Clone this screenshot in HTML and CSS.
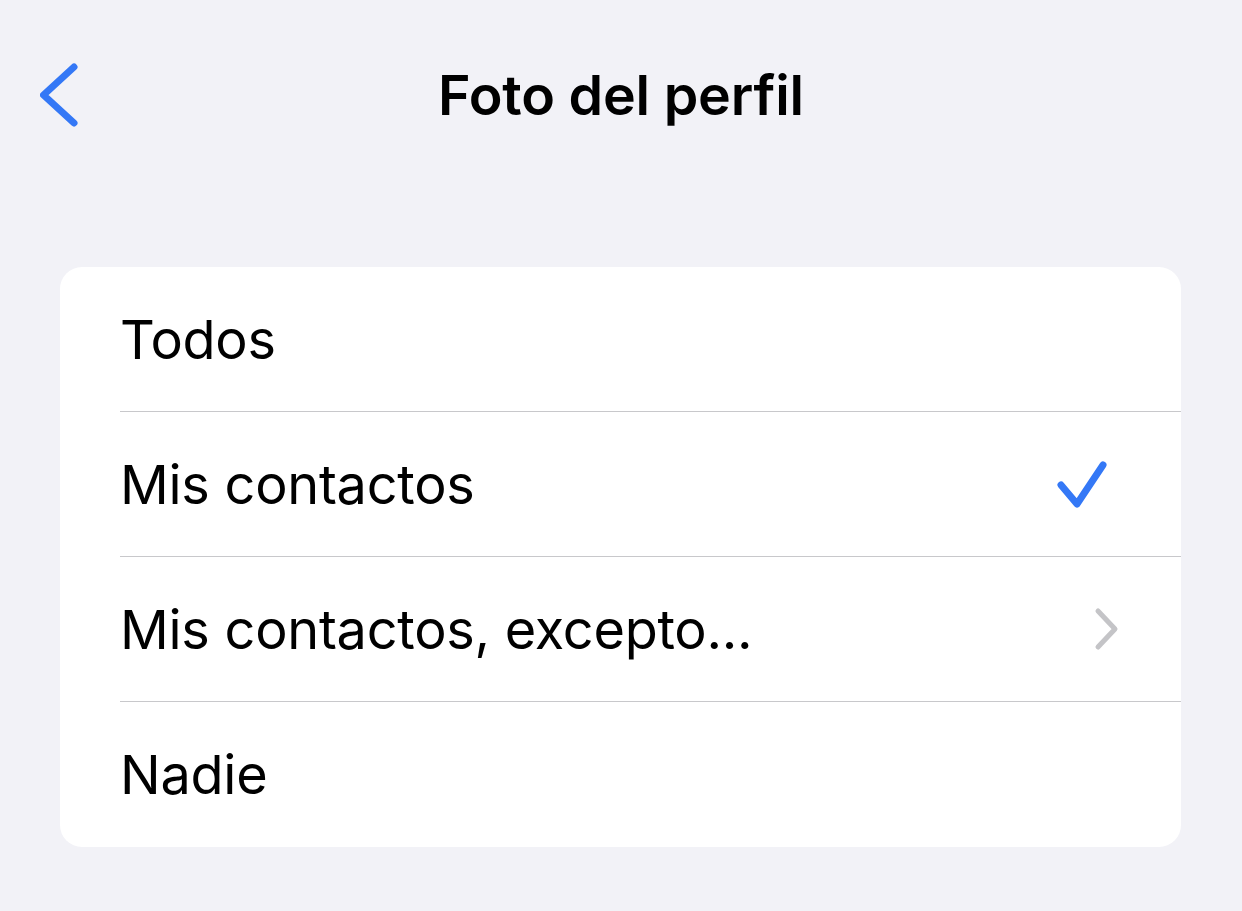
FILE: index.html
```html
<!DOCTYPE html>
<html lang="es">
<head>
  <meta charset="UTF-8">
  <meta name="viewport" content="width=device-width, initial-scale=1.0">
  <title>Foto del perfil</title>
  <link rel="stylesheet" href="styles.css">
</head>
<body>
  <div class="screen">
    <header class="navbar">
      <button class="back" aria-label="Atrás">
        <svg width="40" height="64" viewBox="0 0 40 64">
          <path d="M34 4 L3.5 32 L34 60" fill="none" stroke="#3478f6" stroke-width="7" stroke-linecap="round" stroke-linejoin="round"/>
        </svg>
      </button>
      <h1 class="title">Foto del perfil</h1>
      <div class="spacer"></div>
    </header>

    <div class="list">
      <div class="row">
        <div class="row-inner">
          <span class="label">Todos</span>
        </div>
      </div>
      <div class="row">
        <div class="row-inner">
          <span class="label">Mis contactos</span>
          <svg class="check" width="52" height="50" viewBox="0 0 52 50">
            <path d="M5 26 L21 45 L47 6" fill="none" stroke="#3478f6" stroke-width="7" stroke-linecap="round" stroke-linejoin="round"/>
          </svg>
        </div>
      </div>
      <div class="row">
        <div class="row-inner">
          <span class="label">Mis contactos, excepto...</span>
          <svg class="chevron" width="26" height="44" viewBox="0 0 26 44">
            <path d="M4 4 L21 22 L4 40" fill="none" stroke="#c4c4c7" stroke-width="5" stroke-linecap="round" stroke-linejoin="round"/>
          </svg>
        </div>
      </div>
      <div class="row">
        <div class="row-inner">
          <span class="label">Nadie</span>
        </div>
      </div>
    </div>
  </div>
</body>
</html>
```

FILE: styles.css
```css
body {
  margin: 0;
  background-color: #f2f2f7;
  font-family: Inter, "Noto Sans", sans-serif;
  color: #000;
}

.screen {
  width: 1242px;
  height: 911px;
}

.navbar {
  height: 188px;
  display: grid;
  grid-template-columns: 120px 1fr 120px;
  align-items: center;
  padding: 0 40px;
  box-sizing: border-box;
}

.back {
  background: none;
  border: none;
  padding: 0;
  margin: 2px 0 0;
  width: 40px;
  height: 64px;
  cursor: pointer;
}

.back svg {
  display: block;
}

.title {
  margin: 0;
  text-align: center;
  font-size: 55.5px;
  font-weight: 600;
  letter-spacing: -0.2px;
}

.list {
  margin: 79px 61px 0 60px;
  background-color: #fff;
  border-radius: 22px;
  overflow: hidden;
}

.row {
  padding-left: 60px;
}

.row-inner {
  height: 145px;
  display: flex;
  align-items: center;
  justify-content: space-between;
  padding-right: 61px;
  border-bottom: 1px solid #c8c8cb;
  box-sizing: border-box;
}

.row:last-child .row-inner {
  border-bottom: none;
}

.label {
  font-size: 54px;
  font-weight: 400;
  letter-spacing: -0.25px;
}

.check {
  display: block;
  margin-right: 12px;
}

.chevron {
  display: block;
}
```
